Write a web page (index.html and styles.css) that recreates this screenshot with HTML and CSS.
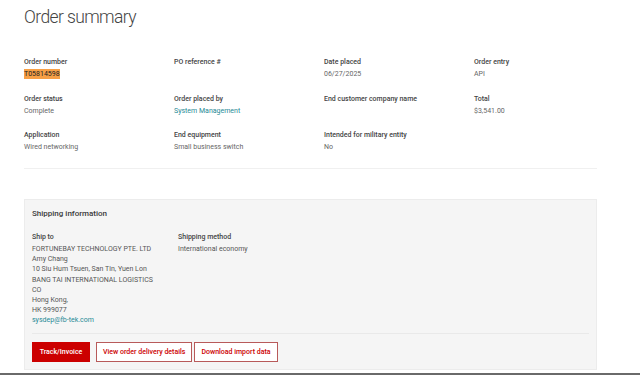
FILE: index.html
```html
<!DOCTYPE html>
<html>
<head>
<meta charset="utf-8">
<link rel="stylesheet" href="styles.css">
</head>
<body>
<div class="page">
  <h1 class="title">Order summary</h1>
  <div class="details">
    <div class="field"><div class="label">Order number</div><div class="value"><span class="hl">T05814598</span></div></div>
    <div class="field"><div class="label">PO reference #</div><div class="value"></div></div>
    <div class="field"><div class="label">Date placed</div><div class="value">06/27/2025</div></div>
    <div class="field"><div class="label">Order entry</div><div class="value">API</div></div>
    <div class="field"><div class="label">Order status</div><div class="value">Complete</div></div>
    <div class="field"><div class="label">Order placed by</div><div class="value link">System Management</div></div>
    <div class="field"><div class="label">End customer company name</div><div class="value"></div></div>
    <div class="field"><div class="label">Total</div><div class="value">$3,541.00</div></div>
    <div class="field"><div class="label">Application</div><div class="value">Wired networking</div></div>
    <div class="field"><div class="label">End equipment</div><div class="value">Small business switch</div></div>
    <div class="field"><div class="label">Intended for military entity</div><div class="value">No</div></div>
  </div>
  <hr class="divider">
  <section class="shipping">
    <h2 class="ship-title">Shipping information</h2>
    <div class="ship-cols">
      <div class="ship-col addr">
        <div class="label">Ship to</div>
        <div class="lines">
          <div>FORTUNEBAY TECHNOLOGY PTE. LTD</div>
          <div>Amy Chang</div>
          <div>10 Siu Hum Tsuen, San Tin, Yuen Lon</div>
          <div>BANG TAI INTERNATIONAL LOGISTICS CO</div>
          <div>Hong Kong,</div>
          <div>HK 999077</div>
          <div class="link">sysdep@fb-tek.com</div>
        </div>
      </div>
      <div class="ship-col">
        <div class="label">Shipping method</div>
        <div class="lines"><div>International economy</div></div>
      </div>
    </div>
    <div class="actions">
      <button class="btn primary">Track/Invoice</button>
      <button class="btn outline first">View order delivery details</button>
      <button class="btn outline">Download import data</button>
    </div>
  </section>
</div>
</body>
</html>
```
FILE: styles.css
```css
* { box-sizing: border-box; }
html, body { margin: 0; padding: 0; background: #fff; }
body { font-family: Roboto, "Liberation Sans", Arial, sans-serif; }
.page {
  height: 375px;
  border-bottom: 2px solid #6a6a6a;
  padding: 0 43px 0 24px;
  overflow: hidden;
}
.title {
  margin: 0;
  padding-top: 4px;
  font-size: 17.5px;
  letter-spacing: -0.6px;
  font-weight: 300;
  color: #444;
  line-height: 26px;
}
.details {
  margin-top: 27px;
  display: grid;
  grid-template-columns: repeat(4, 150px);
  row-gap: 14.5px;
}
.label {
  font-size: 7px;
  font-weight: 500;
  color: #444;
  line-height: 10px;
}
.value {
  margin-top: 2px;
  font-size: 7px;
  color: #666;
  line-height: 10px;
  min-height: 10px;
}
.hl { background: #f7a046; color: #222; padding: 1px 0; }
.link { color: #1f8a96; }
.divider {
  margin: 16px 0 0;
  border: 0;
  border-top: 1px solid #f0f0f0;
}
.shipping {
  margin-top: 30px;
  background: #f5f5f5;
  border: 1px solid #ececec;
  padding: 8px 7px 7px;
}
.ship-title {
  margin: 0;
  font-size: 8px;
  font-weight: 500;
  color: #3a3a3a;
  line-height: 12px;
}
.ship-cols { display: flex; margin-top: 12px; }
.ship-col { width: 146px; }
.addr { padding-right: 18px; }
.lines { margin-top: 2px; font-size: 7px; color: #555; line-height: 10.2px; }
.actions {
  margin-top: 7px;
  border-top: 1px solid #e9e9e9;
  padding-top: 8px;
  display: flex;
  gap: 2px;
}
.btn {
  font-family: inherit;
  font-size: 7px;
  font-weight: 500;
  height: 20px;
  padding: 0 6px;
  cursor: pointer;
}
.primary { background: #cc0000; color: #fff; border: 1px solid #cc0000; width: 58px; }
.outline { background: #fff; color: #cc0000; border: 1px solid #b85a5a; }
.outline.first { margin-left: 4px; }
```
